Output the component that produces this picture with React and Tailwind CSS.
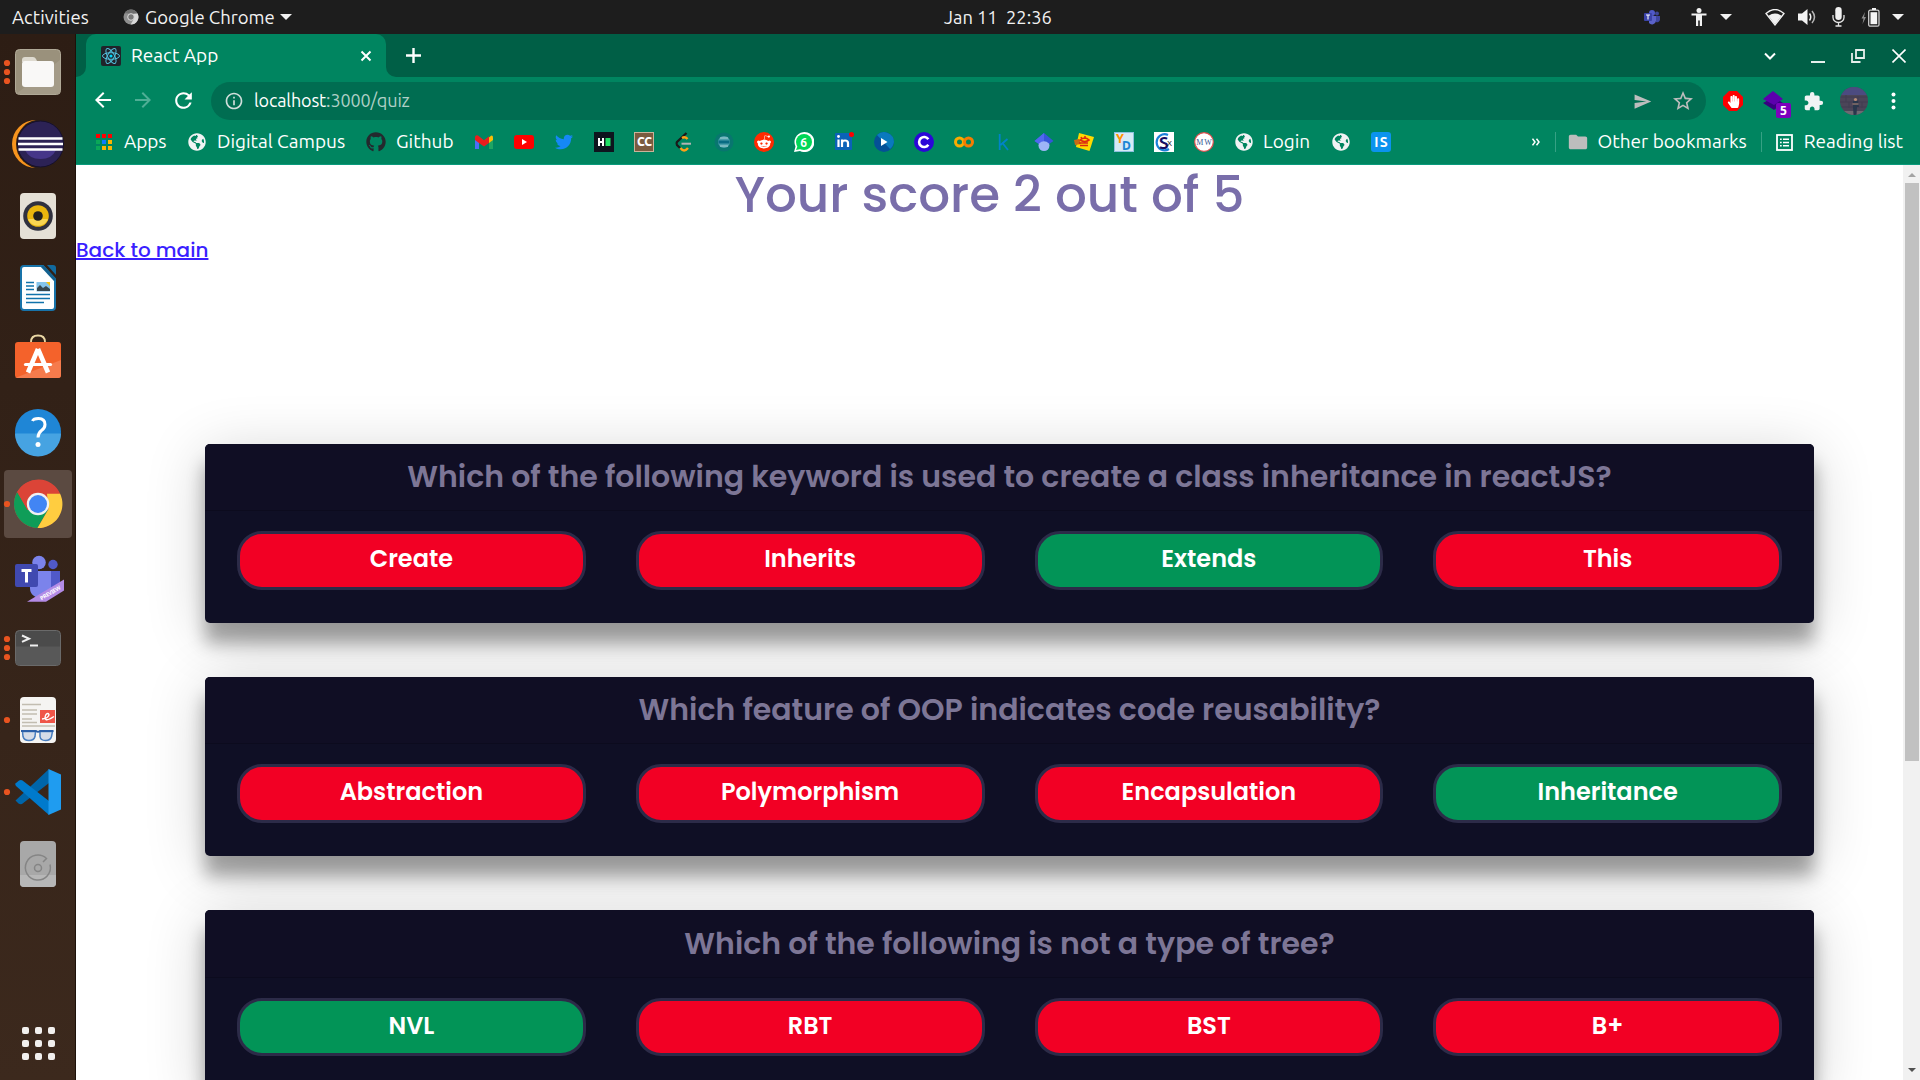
import React from "react";
import {
  MdArrowBack,
  MdArrowForward,
  MdRefresh,
  MdInfoOutline,
  MdSend,
  MdStarOutline,
  MdExtension,
  MdFolder,
} from "react-icons/md";
import { FaGithub, FaTwitter, FaRedditAlien, FaHandPaper, FaGlobeAmericas } from "react-icons/fa";

/* ---------- Top bar ---------- */

function Caret({ className }) {
  return (
    <svg className={className} width="12" height="6" viewBox="0 0 12 6">
      <path d="M0 0h12L6 6z" fill="#f2f2f2" />
    </svg>
  );
}

function TopBar() {
  return (
    <header className="flex h-[34px] shrink-0 items-center bg-[#1d1d1d] text-[18.5px] leading-none text-[#f2f2f2]">
      <div className="flex w-[660px] items-center pl-3">
        <span className="w-[111px] tracking-[0.1px]">Activities</span>
        <svg width="16" height="16" viewBox="0 0 16 16">
          <circle cx="8" cy="8" r="7.5" fill="#8f8f8f" />
          <path d="M1.5 4.3A7.5 7.5 0 0 1 14.5 4.4H8z" fill="#6e6e6e" />
          <path d="M14.5 4.4A7.5 7.5 0 0 1 7.6 15.5l3.5-6L10 5z" fill="#d8d8d8" />
          <circle cx="8" cy="8" r="3.3" fill="#777" stroke="#dcdcdc" strokeWidth="1" />
        </svg>
        <span className="ml-[6px] w-[135px] whitespace-nowrap">Google Chrome</span>
        <Caret className="" />
      </div>
      <div className="flex-1 whitespace-pre pl-[284px] text-[18.3px]">Jan 11  22:36</div>
      <div className="flex items-center pr-[16px]">
        <svg width="16" height="15" viewBox="0 0 16 15">
          <circle cx="8" cy="3" r="3" fill="#5059c9" />
          <circle cx="13" cy="3.5" r="2" fill="#3f4799" />
          <path d="M5 6h7v5a4 4 0 0 1-7 2z" fill="#5b62c9" />
          <path d="M12 6h4v4a3 3 0 0 1-4 2z" fill="#3f46a0" />
          <rect y="3" width="8" height="8" rx="1" fill="#3b43a8" />
          <path d="M2 5h4M4 5v4.5" stroke="#fff" strokeWidth="1.1" />
        </svg>
        <svg className="ml-[31px]" width="16" height="18" viewBox="0 0 16 18" fill="#f2f2f2">
          <circle cx="8" cy="2.5" r="2.5" />
          <path d="M0.5 5.5h15v2H11V18H8.8v-5.500H7.2V18H5V7.500H.5z" />
        </svg>
        <Caret className="ml-[13px]" />
        <svg className="ml-[33px]" width="20" height="17" viewBox="0 0 20 17" fill="#f2f2f2">
          <path d="M1 4.500Q10 -3.500 19 4.500L10 16z" fill="none" stroke="#f2f2f2" strokeWidth="1.300" />
          <path d="M3.500 6.800Q10 2 16.500 6.800L10 15.500z" />
        </svg>
        <svg className="ml-[13px]" width="19" height="18" viewBox="0 0 19 18">
          <path d="M0 5.500h4L9.500 1v16L4 12.500H0z" fill="#f2f2f2" />
          <path d="M11.500 5.500q2.500 3.500 0 7" fill="none" stroke="#f2f2f2" strokeWidth="1.500" />
          <path d="M14 3q5 6 0 12" fill="none" stroke="#b5b5b5" strokeWidth="1.500" />
        </svg>
        <svg className="ml-[15px]" width="13" height="20" viewBox="0 0 13 20">
          <rect x="3.300" y="0" width="6.400" height="13" rx="3.200" fill="#f2f2f2" />
          <path d="M1 8v2.500a5.500 5 0 0 0 11 0V8M6.500 15.500V19M3.500 19h6" fill="none" stroke="#e5e5e5" strokeWidth="1.300" />
        </svg>
        <svg className="ml-[16px]" width="19" height="19" viewBox="0 0 19 19">
          <path d="M4 4L.5 10.500h2L1.500 16 5 9H3z" fill="#8c8c8c" />
          <rect x="7.700" y="2.200" width="10.300" height="16" rx="1.500" fill="none" stroke="#cfcfcf" strokeWidth="1.300" />
          <rect x="9.500" y="4.200" width="6.700" height="12" fill="#f5f5f5" />
          <rect x="11" y="0" width="4" height="2" fill="#f2f2f2" />
        </svg>
        <Caret className="ml-[12px]" />
      </div>
    </header>
  );
}

/* ---------- Dock ---------- */

const markerRows = { 0: [], 1: [36], 3: [27, 36, 45] };

function DockItem({ markers = 0, children }) {
  return (
    <svg className="shrink-0" width="76" height="72" viewBox="0 0 76 72">
      {children}
      {markerRows[markers].map((y) => (
        <circle key={y} cx="7" cy={y} r="3.1" fill="#e95420" />
      ))}
    </svg>
  );
}

function Dock() {
  return (
    <nav className="flex w-[76px] shrink-0 flex-col border-r border-[#1d1109] bg-gradient-to-b from-[#2d1d14] to-[#3c291d] pt-[2px]">
      <DockItem markers={3}>
        <rect x="15.500" y="13.500" width="45" height="45" rx="4" fill="#9a917c" stroke="#b0a997" />
        <path d="M16 58L60 24v31q0 3-3 3z" fill="#a49b88" />
        <path d="M22 24q0-3 3-3h8q2 0 3 2l1.500 3H22z" fill="#dedad0" />
        <rect x="22" y="25" width="32" height="26" rx="3" fill="#f9f8f7" />
      </DockItem>
      <DockItem>
        <circle cx="36" cy="36" r="24" fill="#f7941e" />
        <circle cx="40.500" cy="36" r="24.500" fill="#2f1f15" />
        <circle cx="40.500" cy="36" r="23" fill="#2c2255" stroke="#15102d" />
        <path d="M25 42h31q-4 9-15.500 9T25 42z" fill="#463689" />
        <path d="M18.500 30.500h44M18 36h45M18.500 41.500h44" stroke="#fff" strokeWidth="2.600" />
      </DockItem>
      <DockItem>
        <rect x="20" y="13" width="36" height="46" rx="4" fill="#e5e0d6" />
        <circle cx="38" cy="36" r="14.800" fill="#30313f" />
        <circle cx="38" cy="36" r="10.800" fill="#eab60d" />
        <path d="M28 39a10.800 10.800 0 0 0 20 0z" fill="#f8d552" />
        <circle cx="38" cy="36" r="4.800" fill="#22211f" />
      </DockItem>
      <DockItem>
        <path d="M24 14h19l12 13v28q0 3-3 3H24q-3 0-3-3V17q0-3 3-3z" fill="#fff" stroke="#1873a9" strokeWidth="2" />
        <path d="M47 13h6q3 0 3 3v7z" fill="#116a9f" />
        <path d="M42 14l13 14" stroke="#12618f" strokeWidth="3" />
        <path d="M26 30.500h8M26 34h8M26 37.500h8M26 42.500h24M26 46.500h24M26 50.500h18" stroke="#1173ab" strokeWidth="1.600" />
        <rect x="36.500" y="30" width="13.500" height="9.500" fill="#84c4ec" />
        <path d="M37 39v-3l3-3 3 3 3-2 4 3v2z" fill="#37474f" />
        <path d="M46 30h4v4z" fill="#f5c211" />
      </DockItem>
      <DockItem>
        <path d="M31 19v-1q0-6.500 7-6.500t7 6.500v1" fill="none" stroke="#ead7a4" strokeWidth="1.800" />
        <rect x="15" y="18" width="46" height="36" rx="3" fill="#f4622b" />
        <path d="M15 54L61 36v15q0 3-3 3z" fill="#f67b4c" />
        <path d="M38 25L28 48.500M38 25l10 23.500" stroke="#fff" strokeWidth="4.600" fill="none" />
        <path d="M25.500 40.500h25" stroke="#fff" strokeWidth="3.200" strokeLinecap="round" />
      </DockItem>
      <DockItem>
        <circle cx="38" cy="36" r="23" fill="#1f86d6" />
        <path d="M15 37.500h46a23 23 0 0 1-46 0z" fill="#46a3e2" />
        <path d="M32.500 25q1-2.500 6-2.500 6.500 0 6.500 6 0 3.500-3.500 6-3.300 2.500-3.500 7" fill="none" stroke="#fff" strokeWidth="3" />
        <circle cx="38" cy="48.500" r="2.500" fill="#fff" />
      </DockItem>
      <DockItem markers={1}>
        <rect x="4" y="2" width="68" height="68" rx="4" fill="#5b4a41" />
        <circle cx="38" cy="36" r="24" fill="#db4437" />
        <path d="M17.200 24A24 24 0 0 0 37.500 60l10.800-18.500L27.500 42z" fill="#0f9d58" />
        <path d="M60 25.500A24 24 0 0 1 37.500 60l10.800-18.500L47 25.500z" fill="#ffcd40" />
        <path d="M38 25.500h22A24 24 0 0 0 17.200 24l10.500 18z" fill="#db4437" />
        <circle cx="38" cy="36" r="11.200" fill="#f1f1f1" />
        <circle cx="38" cy="36" r="9" fill="#4285f4" />
      </DockItem>
      <DockItem>
        <circle cx="39" cy="22.500" r="6.800" fill="#7b83eb" />
        <circle cx="53" cy="24.500" r="4.700" fill="#5059c9" />
        <path d="M48 31h12v17q-4 6-12 4z" fill="#5059c9" />
        <path d="M30 31h21v23q-4 5-11 4.500Q29 56 30 46z" fill="#7b83eb" />
        <rect x="15" y="24" width="23" height="23" rx="2" fill="#4049b0" />
        <path d="M21.500 30.500h10M26.500 30.500v12" stroke="#fff" strokeWidth="3" />
        <path d="M27 61.800L64 39.500v11L46 61.800z" fill="#b38be6" />
        <text transform="translate(41.500 60.500) rotate(-31)" fill="#fff" fontSize="5.600" fontWeight="700" fontFamily="Noto Sans" textLength="23">PREVIEW</text>
      </DockItem>
      <DockItem markers={3}>
        <rect x="15.500" y="18.500" width="45" height="35" rx="4" fill="#4b4b4b" stroke="#6a6a6a" />
        <path d="M16 34.500h44V50q0 3-3 3H19q-3 0-3-3z" fill="#585858" />
        <path d="M22 23.500l7 3.200-7 3.200M30 33.500h8" fill="none" stroke="#f0f0f0" strokeWidth="2" />
      </DockItem>
      <DockItem markers={1}>
        <rect x="20" y="13" width="36" height="46" rx="4" fill="#f5f4f2" />
        <path d="M22 20.500h19M22 26h15M22 30h15M22 35h10M22 38.500h15M22 42h33" stroke="#c2bdb1" strokeWidth="1.500" />
        <rect x="40" y="26" width="15" height="13" fill="#ef5548" />
        <path d="M42 35q7-1 7-4.500-1-2-3 0-2 4 0 5t8-3" fill="none" stroke="#fff" strokeWidth="1.400" />
        <path d="M22.500 47.500h13l-.5 5q-1 4-6 4t-6-4zM40 47.500h12.500l-1 5q-1 4-6 4t-5.500-4z" fill="#d5dce8" stroke="#4a7fc0" strokeWidth="1.500" />
        <path d="M21 47h15q2 1.500 4 0h13.500" fill="none" stroke="#2b5fa8" strokeWidth="2" />
      </DockItem>
      <DockItem markers={1}>
        <path d="M15.500 44.500L49 13v14L22 48q-2 .5-3.500-.5z" fill="#0065a9" />
        <path d="M15.500 27.500L19 24.500q2-1 3.500 0L49 45v14L16 30q-1.200-1.300-.5-2.500z" fill="#007acc" />
        <path d="M48.500 13L61 18.500v35L48.500 59z" fill="#1f9cf0" />
      </DockItem>
      <DockItem>
        <rect x="20" y="13" width="36" height="46" rx="4" fill="#a8a8a8" />
        <path d="M20 47h36v8q0 4-4 4H24q-4 0-4-4z" fill="#b7b7b7" />
        <circle cx="38" cy="40" r="3.500" fill="none" stroke="#858585" strokeWidth="1.500" />
        <path d="M50 36.500A12.500 12.500 0 1 1 46.500 30.500L43 34" fill="none" stroke="#858585" strokeWidth="1.500" />
      </DockItem>
      <div className="ml-[22px] mt-auto grid grid-cols-[7px_7px_7px] gap-[6px] pb-[20px]">
        {[0, 1, 2, 3, 4, 5, 6, 7, 8].map((n) => (
          <span key={n} className="size-[7px] rounded-[2px] bg-[#f2f0ee]" />
        ))}
      </div>
    </nav>
  );
}

/* ---------- Browser chrome ---------- */

function TabStrip() {
  return (
    <div className="flex h-[43px] bg-[#008560]">
      <div className="w-[10px] rounded-br-[10px] bg-[#005f46]" />
      <div className="flex bg-[#005f46]">
        <div className="flex w-[300px] items-center rounded-t-[10px] bg-[#008560] pl-[15px] pr-[14px]">
          <svg width="20" height="20" viewBox="0 0 20 20">
            <rect width="20" height="20" rx="2" fill="#20232a" />
            <g fill="none" stroke="#53c1de" strokeWidth="1">
              <ellipse cx="10" cy="10" rx="8.500" ry="3.300" />
              <ellipse cx="10" cy="10" rx="8.500" ry="3.300" transform="rotate(60 10 10)" />
              <ellipse cx="10" cy="10" rx="8.500" ry="3.300" transform="rotate(120 10 10)" />
            </g>
            <circle cx="10" cy="10" r="1.600" fill="#00d8ff" />
          </svg>
          <span className="ml-[10px] flex-1 pb-px text-[19px] leading-none">React App</span>
          <svg width="12" height="12" viewBox="0 0 12 12">
            <path d="M1.500 1.500l9 9M10.500 1.500l-9 9" stroke="#fff" strokeWidth="2" />
          </svg>
        </div>
      </div>
      <div className="flex flex-1 items-center rounded-bl-[10px] bg-[#005f46] pl-5 pr-[14px]">
        <svg width="15" height="15" viewBox="0 0 15 15">
          <path d="M7.500 0v15M0 7.500h15" stroke="#fff" strokeWidth="2.400" />
        </svg>
        <svg className="ml-auto" width="12" height="8" viewBox="0 0 12 8">
          <path d="M1 1.500l5 5 5-5" fill="none" stroke="#fff" strokeWidth="2" />
        </svg>
        <svg className="ml-[35px]" width="14" height="14" viewBox="0 0 14 14">
          <path d="M0 13h14" stroke="#e6efec" strokeWidth="2" />
        </svg>
        <svg className="ml-[26px]" width="14" height="14" viewBox="0 0 14 14">
          <path d="M5 1h8v8H5zM1 4v9h8.500" fill="none" stroke="#e6efec" strokeWidth="1.800" />
        </svg>
        <svg className="ml-[27px]" width="14" height="14" viewBox="0 0 14 14">
          <path d="M.5.5l13 13M13.500.5l-13 13" stroke="#fff" strokeWidth="1.600" />
        </svg>
      </div>
    </div>
  );
}

function Toolbar() {
  return (
    <div className="flex h-[43px] items-center bg-[#008560] pl-[15px] pt-[5px] text-[#e9f5f1]">
      <div className="flex w-[120px] items-center gap-[16px] pb-[2px]">
        <MdArrowBack size={24} className="text-white" />
        <MdArrowForward size={24} className="text-[#4fae95]" />
        <MdRefresh size={25} className="text-white" />
      </div>
      <div className="flex h-[38px] w-[1495px] items-center rounded-full bg-[#006d51] pl-[13px] pr-[11px]">
        <MdInfoOutline size={20} className="text-[#d0dedb]" />
        <span className="ml-[10px] flex-1 pb-[2px] text-[18px] leading-none tracking-[-0.13px] text-[#afd0c6]">
          <span className="text-white">localhost</span>:3000/quiz
        </span>
        <MdSend size={19} className="text-[#bdbdbd]" />
        <MdStarOutline size={24} className="ml-[19px] text-[#bdbdbd]" />
      </div>
      <div className="flex items-center">
        <span className="ml-[17px] flex size-5 items-center justify-center bg-[#ff0000] [clip-path:polygon(30%_0,70%_0,100%_30%,100%_70%,70%_100%,30%_100%,0_70%,0_30%)]">
          <FaHandPaper size={13} className="text-white" />
        </span>
        <span className="relative ml-5 h-[22px] w-[21px]">
          <svg width="21" height="22" viewBox="0 0 21 22">
            <path d="M0 13l11 7 9-7-9-6z" fill="#370080" />
            <path d="M0 9L10 1l10 8-9 6z" fill="#5c00ad" />
          </svg>
          <span className="absolute left-[13px] top-[13px] flex h-[15px] w-[15px] items-center justify-center rounded-[2px] bg-[#7c00bd] font-['Noto_Sans'] text-[12px] font-bold leading-none text-white">
            5
          </span>
        </span>
        <MdExtension size={21} className="ml-[19px] text-[#f1f3f4]" />
        <svg className="ml-[16px]" width="28" height="28" viewBox="0 0 28 28">
          <defs>
            <clipPath id="avatar">
              <circle cx="14" cy="14" r="14" />
            </clipPath>
          </defs>
          <g clipPath="url(#avatar)">
            <rect width="28" height="28" fill="#4b4558" />
            <rect width="28" height="8" fill="#4c4b80" />
            <path d="M0 10h28M0 15h28M0 20h28M6 8v7M18 9v6M9 15v6M22 15v6" stroke="#433d50" strokeWidth="1" />
            <path d="M0 24h28v4H0z" fill="#6e6a72" />
            <path d="M13 14h5l1 6h-2l-.500 8h-3L13 20z" fill="#29374d" />
            <circle cx="15.500" cy="12.500" r="1.600" fill="#b98d78" />
            <path d="M12.500 17h6" stroke="#b98d78" />
          </g>
        </svg>
        <svg className="ml-[23px]" width="5" height="18" viewBox="0 0 5 18" fill="#fff">
          <circle cx="2.500" cy="2.500" r="2" />
          <circle cx="2.500" cy="9" r="2" />
          <circle cx="2.500" cy="15.500" r="2" />
        </svg>
      </div>
    </div>
  );
}

const appDots = ["#f00", "#f00", "#f00", "#0aa858", "#0b7bff", "#fbb400", "#0aa858", "#fbb400", "#fbb400"];

function Globe() {
  return <FaGlobeAmericas size={18} className="mx-[1px] text-[#f1f3f4]" />;
}

/* Each favicon is a drawing on a 20 by 20 grid. */
const favicons = [
  <g key="gmail">
    <path d="M1 5v12h4V8z" fill="#4c6ef5" />
    <path d="M15 8v9h4V5z" fill="#1fa463" />
    <path d="M15 5.500l2-1.800q2-.7 2 2V8l-4 3z" fill="#fbbc04" />
    <path d="M1 8V5q.5-2.500 3-1.500l6 4.700 5-4V11l-5 3.500L5 11z" fill="#ea1d1d" />
  </g>,
  <g key="youtube">
    <rect y="3" width="20" height="14" rx="3" fill="#f00" />
    <path d="M8 7l5 3-5 3z" fill="#fff" />
  </g>,
  <g key="twitter">
    <FaTwitter size={18} x="1" y="1" color="#1588f5" />
  </g>,
  <g key="hackerrank">
    <rect width="20" height="20" fill="#0e141e" />
    <path d="M5 6v8M9 6v8M5 10h4" stroke="#fff" strokeWidth="2" />
    <rect x="11.500" y="6" width="5" height="8" fill="#1fe066" />
  </g>,
  <g key="codechef">
    <rect x=".5" y=".5" width="19" height="19" fill="#7b5b3f" stroke="#c9b49b" />
    <text x="3" y="14" fontSize="12" fontWeight="800" fill="#fff" textLength="15">CC</text>
  </g>,
  <g key="leetcode">
    <path d="M12.500 1L3 10q-1 1.500 0 3l3 3" fill="none" stroke="#1a1a1a" strokeWidth="2.300" />
    <path d="M8 6q3-2 5.500 1M6.500 16q3.500 5 7.500 0" fill="none" stroke="#ffa116" strokeWidth="2.300" />
    <path d="M7.500 11.700h9.500" stroke="#b3b3b3" strokeWidth="2" />
  </g>,
  <g key="ninja">
    <circle cx="10" cy="10" r="9.500" fill="#08766f" />
    <circle cx="10" cy="10" r="6" fill="#4a9eab" />
    <path d="M4.500 8.500h11v3h-11z" fill="#096b83" />
    <path d="M6 6h8M6 14h8" stroke="#a6d3d4" />
  </g>,
  <g key="reddit">
    <circle cx="10" cy="10" r="10" fill="#ff2a00" />
    <FaRedditAlien size={15} x="2.500" y="2.500" color="#fff" />
  </g>,
  <g key="whatsapp">
    <path d="M0 20l1.500-5.500A10 10 0 1 1 6 19z" fill="#fff" />
    <circle cx="10" cy="10" r="8" fill="#00d757" />
    <path d="M2 18l2-5 3 4z" fill="#00d757" />
    <text x="6.300" y="14.500" fontSize="12" fontWeight="700" fill="#fff">6</text>
  </g>,
  <g key="linkedin">
    <rect x="1" y="1" width="17" height="17" rx="1" fill="#0b62b8" />
    <path d="M4.500 7.500V15M8 7.500V15M8 11q0-2.500 3-2.500t3 2.500v4" stroke="#fff" strokeWidth="2.200" fill="none" />
    <circle cx="4.500" cy="4.500" r="1.400" fill="#fff" />
    <circle cx="17.500" cy="2.500" r="2.500" fill="#f00" />
  </g>,
  <g key="player">
    <circle cx="10" cy="10" r="10" fill="#045097" />
    <path d="M3 3A10 10 0 0 1 20 10q-1 5-4 7z" fill="#0a79be" />
    <path d="M7 6l6.500 4L7 14z" fill="#fff" />
  </g>,
  <g key="coursera">
    <circle cx="10" cy="10" r="10" fill="#2b06d8" />
    <path d="M14.300 7.300A5 5 0 1 0 14.300 12.700" fill="none" stroke="#fff" strokeWidth="2.600" />
  </g>,
  <g key="colab" fill="none" strokeWidth="3">
    <circle cx="5.500" cy="10" r="4" stroke="#f9ab00" />
    <circle cx="14.500" cy="10" r="4" stroke="#f57c00" />
  </g>,
  <g key="kaggle">
    <path d="M5.700 2v16M13.500 7l-7 6M8.500 11l5.500 7" stroke="#0083c9" strokeWidth="1.800" fill="none" />
  </g>,
  <g key="scholar">
    <circle cx="10" cy="13.500" r="5.500" fill="#9db5f7" />
    <path d="M10 1l9.500 8-5 3.500h-9L.5 9z" fill="#3556d8" />
    <path d="M10 1v11.500H5.500L.5 9z" fill="#5068ee" />
    <path d="M5 11.500q5-4.500 10 0v3q-5 3-10 0z" fill="#9db5f7" />
  </g>,
  <g key="post">
    <path d="M5 1l15 4-4.500 14L2 15z" fill="#ffd900" />
    <path d="M0 8l5-1 2 5-6 1z" fill="#c96a14" />
    <path d="M6 8q5-4 9 0-4 3-9 0zM5 11h9M6 13.500h8M7 5l1 2M11 4v3" stroke="#dc2a12" strokeWidth="1.600" fill="none" />
  </g>,
  <g key="yd" fontWeight="800" fontSize="12">
    <rect x=".5" y=".5" width="19" height="19" fill="#d5eaf5" stroke="#8dc1de" />
    <text x="2" y="10.500" fill="#ff9300">Y</text>
    <text x="8" y="17.500" fill="#1c86d5">D</text>
  </g>,
  <g key="csx">
    <rect width="20" height="20" fill="#fff" />
    <path d="M14 3A8 8 0 1 0 15 17" fill="none" stroke="#1c80d8" strokeWidth="2.200" />
    <text x="5" y="16.500" fontSize="17" fontWeight="700" fill="#160d63">S</text>
    <text x="13" y="14" fontSize="10" fill="#111">x</text>
  </g>,
  <g key="mw">
    <circle cx="10" cy="10" r="9.300" fill="#fff" stroke="#e05050" strokeWidth="1.200" />
    <text x="2.300" y="13" fontSize="8" fontFamily="Liberation Serif" fill="#375a94" textLength="15.500">MW</text>
  </g>,
];

function Bookmarks() {
  return (
    <div className="flex h-[45px] items-center whitespace-nowrap border-b border-[#0a9b7c] bg-[#008560] pl-[18px] text-[19px] leading-none">
      <div className="flex w-[93px] items-center gap-[10px] tracking-[-0.1px]">
        <span className="grid size-5 grid-cols-[4px_4px_4px] content-center justify-center gap-[2px]">
          {appDots.map((color, n) => (
            <span key={n} className="size-[4px]" style={{ backgroundColor: color }} />
          ))}
        </span>
        <span className="pb-[2px]">Apps</span>
      </div>
      <div className="flex w-[179px] items-center gap-[10px]">
        <Globe />
        <span className="pb-[2px]">Digital Campus</span>
      </div>
      <div className="flex w-[98px] items-center gap-[10px]">
        <FaGithub size={20} className="text-[#24292e]" />
        <span className="pb-[2px]">Github</span>
      </div>
      {favicons.map((icon) => (
        <span key={icon.key} className="flex w-10 justify-center">
          <svg width="20" height="20" viewBox="0 0 20 20">
            {icon}
          </svg>
        </span>
      ))}
      <div className="flex w-[97px] items-center gap-[9px] pl-[10px]">
        <Globe />
        <span className="pb-[2px]">Login</span>
      </div>
      <div className="flex w-[50px] pl-[10px]">
        <Globe />
      </div>
      <svg width="20" height="20" viewBox="0 0 20 20">
        <rect width="20" height="20" rx="3" fill="#0b93ee" />
        <text x="3.200" y="15" fontSize="14" fontWeight="700" fill="#fff" textLength="13.500">IS</text>
      </svg>
      <div className="ml-auto flex items-center pr-[17px]">
        <svg width="8" height="8" viewBox="0 0 8 8">
          <path d="M.5.7L3 4 .5 7.300M4.500.7L7 4 4.500 7.300" fill="none" stroke="#fff" strokeWidth="1.500" />
        </svg>
        <span className="ml-[15px] h-5 w-px bg-[#36a184]" />
        <MdFolder size={22} className="ml-[11px] text-[#bdbdbd]" />
        <span className="ml-[9px] pb-[2px]">Other bookmarks</span>
        <span className="ml-[14px] h-5 w-px bg-[#36a184]" />
        <svg className="ml-[14px]" width="17" height="17" viewBox="0 0 17 17">
          <rect x="1" y="1" width="15" height="15" fill="none" stroke="#fff" strokeWidth="1.800" />
          <path d="M4 5.200h1.700M4 8.500h1.700M4 11.800h1.700M7 5.200h6M7 8.500h6M7 11.800h6" stroke="#fff" strokeWidth="1.600" />
        </svg>
        <span className="ml-[11px] pb-[2px]">Reading list</span>
      </div>
    </div>
  );
}

/* ---------- Quiz page ---------- */

const questions = [
  {
    title: "Which of the following keyword is used to create a class inheritance in reactJS?",
    options: ["Create", "Inherits", "Extends", "This"],
    answer: "Extends",
  },
  {
    title: "Which feature of OOP indicates code reusability?",
    options: ["Abstraction", "Polymorphism", "Encapsulation", "Inheritance"],
    answer: "Inheritance",
  },
  {
    title: "Which of the following is not a type of tree?",
    options: ["NVL", "RBT", "BST", "B+"],
    answer: "NVL",
  },
];

function QuestionCard({ question }) {
  return (
    <section className="h-[179.4px] shrink-0 rounded-[5px] bg-[#0f0f25] shadow-[0_10px_60px_rgba(0,0,0,0.19),0_20px_18px_rgba(0,0,0,0.33)]">
      <h2 className="flex h-[67.4px] items-center justify-center rounded-t-[5px] border-b border-[#0c0b1e] bg-[#100e24] text-[30px] font-semibold leading-none text-[#7d7696]">
        {question.title}
      </h2>
      <div className="grid grid-cols-4 gap-[50px] px-8 pt-5">
        {question.options.map((option) => (
          <div
            key={option}
            className={
              option === question.answer
                ? "flex h-[58.6px] items-center justify-center rounded-[25px] border-[3px] border-[#2c2b48] bg-[#029457] pb-[3px] text-[24px] font-semibold leading-none text-white"
                : "flex h-[58.6px] items-center justify-center rounded-[25px] border-[3px] border-[#2c2b48] bg-[#f20024] pb-[3px] text-[24px] font-semibold leading-none text-white"
            }
          >
            {option}
          </div>
        ))}
      </div>
    </section>
  );
}

function QuizPage() {
  return (
    <main className="flex min-w-0 flex-1 flex-col bg-white font-['Poppins',Inter,sans-serif]">
      <h1 className="h-[60px] shrink-0 text-center text-[50px] font-medium leading-[59px] text-[#796eaa]">
        Your score 2 out of 5
      </h1>
      <div className="h-[218.6px] shrink-0 pt-[13px]">
        <a className="text-[20px] font-medium leading-6 text-[#3a1fff] underline" href="#main">
          Back to main
        </a>
      </div>
      <div className="flex flex-col gap-[54px] pl-[129px] pr-[89px]">
        {questions.map((question) => (
          <QuestionCard key={question.title} question={question} />
        ))}
      </div>
    </main>
  );
}

function Scrollbar() {
  return (
    <div className="flex w-[17px] shrink-0 flex-col items-center bg-[#f1f1f1]">
      <div className="flex h-[18px] items-center pt-[2px]">
        <svg width="8" height="4" viewBox="0 0 8 4">
          <path d="M4 0l4 4H0z" fill="#a3a3a3" />
        </svg>
      </div>
      <div className="h-[578px] w-[14px] bg-[#c1c1c1]" />
      <svg className="mb-[8px] mt-auto" width="8" height="4" viewBox="0 0 8 4">
        <path d="M4 4L0 0h8z" fill="#505050" />
      </svg>
    </div>
  );
}

export default function App() {
  return (
    <div className="flex h-[1080px] w-[1920px] flex-col overflow-hidden font-['Ubuntu','Noto_Sans',sans-serif]">
      <TopBar />
      <div className="flex min-h-0 flex-1">
        <Dock />
        <div className="flex min-w-0 flex-1 flex-col text-white">
          <TabStrip />
          <Toolbar />
          <Bookmarks />
          <div className="flex min-h-0 flex-1">
            <QuizPage />
            <Scrollbar />
          </div>
        </div>
      </div>
    </div>
  );
}
